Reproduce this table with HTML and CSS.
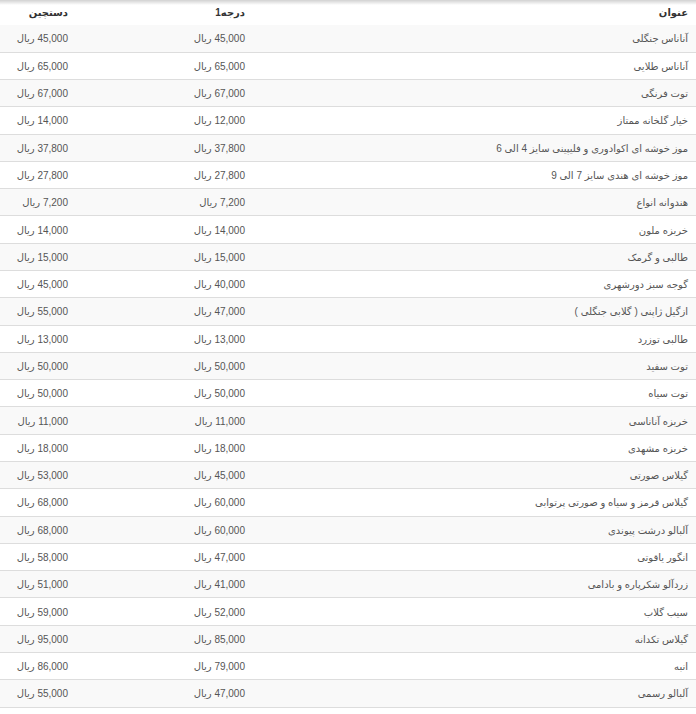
FILE: index.html
```html
<!DOCTYPE html>
<html lang="fa" dir="rtl">
<head>
<meta charset="utf-8">
<title>قیمت میوه</title>
<link rel="stylesheet" href="styles.css">
</head>
<body>
<div class="wrap">
<table class="prices">
<thead>
<tr><th class="c-title">عنوان</th><th class="c-g1">درجه1</th><th class="c-g2">دستچین</th></tr>
</thead>
<tbody>
<tr><td>آناناس جنگلی</td><td>45,000 ریال</td><td>45,000 ریال</td></tr>
<tr><td>آناناس طلایی</td><td>65,000 ریال</td><td>65,000 ریال</td></tr>
<tr><td>توت فرنگی</td><td>67,000 ریال</td><td>67,000 ریال</td></tr>
<tr><td>خیار گلخانه ممتاز</td><td>12,000 ریال</td><td>14,000 ریال</td></tr>
<tr><td>موز خوشه ای اکوادوری و فلیپینی سایز 4 الی 6</td><td>37,800 ریال</td><td>37,800 ریال</td></tr>
<tr><td>موز خوشه ای هندی سایز 7 الی 9</td><td>27,800 ریال</td><td>27,800 ریال</td></tr>
<tr><td>هندوانه انواع</td><td>7,200 ریال</td><td>7,200 ریال</td></tr>
<tr><td>خربزه ملون</td><td>14,000 ریال</td><td>14,000 ریال</td></tr>
<tr><td>طالبی و گرمک</td><td>15,000 ریال</td><td>15,000 ریال</td></tr>
<tr><td>گوجه سبز دورشهری</td><td>40,000 ریال</td><td>45,000 ریال</td></tr>
<tr><td>ازگیل ژاپنی ( گلابی جنگلی )</td><td>47,000 ریال</td><td>55,000 ریال</td></tr>
<tr><td>طالبی توزرد</td><td>13,000 ریال</td><td>13,000 ریال</td></tr>
<tr><td>توت سفید</td><td>50,000 ریال</td><td>50,000 ریال</td></tr>
<tr><td>توت سیاه</td><td>50,000 ریال</td><td>50,000 ریال</td></tr>
<tr><td>خربزه آناناسی</td><td>11,000 ریال</td><td>11,000 ریال</td></tr>
<tr><td>خربزه مشهدی</td><td>18,000 ریال</td><td>18,000 ریال</td></tr>
<tr><td>گیلاس صورتی</td><td>45,000 ریال</td><td>53,000 ریال</td></tr>
<tr><td>گیلاس قرمز و سیاه و صورتی پرتوابی</td><td>60,000 ریال</td><td>68,000 ریال</td></tr>
<tr><td>آلبالو درشت پیوندی</td><td>60,000 ریال</td><td>68,000 ریال</td></tr>
<tr><td>انگور یاقوتی</td><td>47,000 ریال</td><td>58,000 ریال</td></tr>
<tr><td>زردآلو شکرپاره و بادامی</td><td>41,000 ریال</td><td>51,000 ریال</td></tr>
<tr><td>سیب گلاب</td><td>52,000 ریال</td><td>59,000 ریال</td></tr>
<tr><td>گیلاس تکدانه</td><td>85,000 ریال</td><td>95,000 ریال</td></tr>
<tr><td>انبه</td><td>79,000 ریال</td><td>86,000 ریال</td></tr>
<tr><td>آلبالو رسمی</td><td>47,000 ریال</td><td>55,000 ریال</td></tr>
</tbody>
</table>
</div>
</body>
</html>
```
FILE: styles.css
```css
html, body {
  margin: 0;
  padding: 0;
  background: #ffffff;
}
body {
  font-family: "Liberation Sans", "DejaVu Sans", Tahoma, sans-serif;
  font-size: 10px;
  color: #555555;
}
.wrap {
  position: relative;
  width: 696px;
}
.wrap::before {
  content: "";
  position: absolute;
  top: 0;
  left: 0;
  right: 0;
  height: 5px;
  background: linear-gradient(to bottom, rgba(0,0,0,0.18), rgba(0,0,0,0));
  pointer-events: none;
}
.prices {
  width: 696px;
  border-collapse: collapse;
  table-layout: fixed;
}
.prices th {
  height: 25px;
  padding: 0 8px;
  text-align: right;
  font-weight: bold;
  color: #333333;
  background: #ffffff;
  box-sizing: border-box;
}
.c-title { width: 443px; }
.c-g1 { width: 177px; }
.c-g2 { width: 76px; }
.prices td {
  height: 27.29px;
  padding: 1px 8px 0;
  text-align: right;
  border-bottom: 1px solid #dddddd;
  white-space: nowrap;
  box-sizing: border-box;
}
.prices tbody tr:nth-child(odd) td {
  background: #f9f9f9;
}
```
